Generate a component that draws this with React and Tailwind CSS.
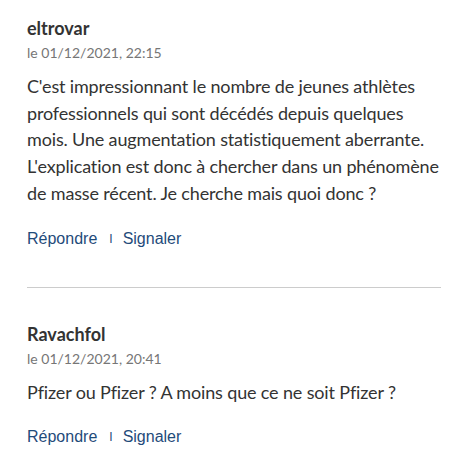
import React from "react";

const comments = [
  {
    author: "eltrovar",
    date: "le 01/12/2021, 22:15",
    text: "C'est impressionnant le nombre de jeunes athlètes professionnels qui sont décédés depuis quelques mois. Une augmentation statistiquement aberrante. L'explication est donc à chercher dans un phénomène de masse récent. Je cherche mais quoi donc ?",
  },
  {
    author: "Ravachfol",
    date: "le 01/12/2021, 20:41",
    text: "Pfizer ou Pfizer ? A moins que ce ne soit Pfizer ?",
  },
];

function Comment({ c, last }) {
  return (
    <div className={last ? "pt-[34px]" : "pb-[36px] border-b border-[#cccccc]"}>
      <div className="text-[18px] leading-[24px] font-bold text-[#333333]">{c.author}</div>
      <div className="mt-[3px] text-[14px] leading-[20px] text-[#767676]">{c.date}</div>
      <p className="mt-[10px] text-[18px] leading-[26.7px] tracking-[-0.15px] text-[#333333]">{c.text}</p>
      <div className="mt-[20px] flex items-center text-[16px] leading-[24px] text-[#1f4b7a] font-['Liberation_Sans',Arial,sans-serif]">
        <a href="#">Répondre</a>
        <span className="ml-[12px] mr-[10px] text-[12px]">I</span>
        <a href="#">Signaler</a>
      </div>
    </div>
  );
}

export default function App() {
  return (
    <div className="bg-white w-[468px] h-[473px] px-[27px] pt-[16px] font-['Lato','Open_Sans',sans-serif]">
      {comments.map((c, i) => (
        <Comment key={i} c={c} last={i === comments.length - 1} />
      ))}
    </div>
  );
}
